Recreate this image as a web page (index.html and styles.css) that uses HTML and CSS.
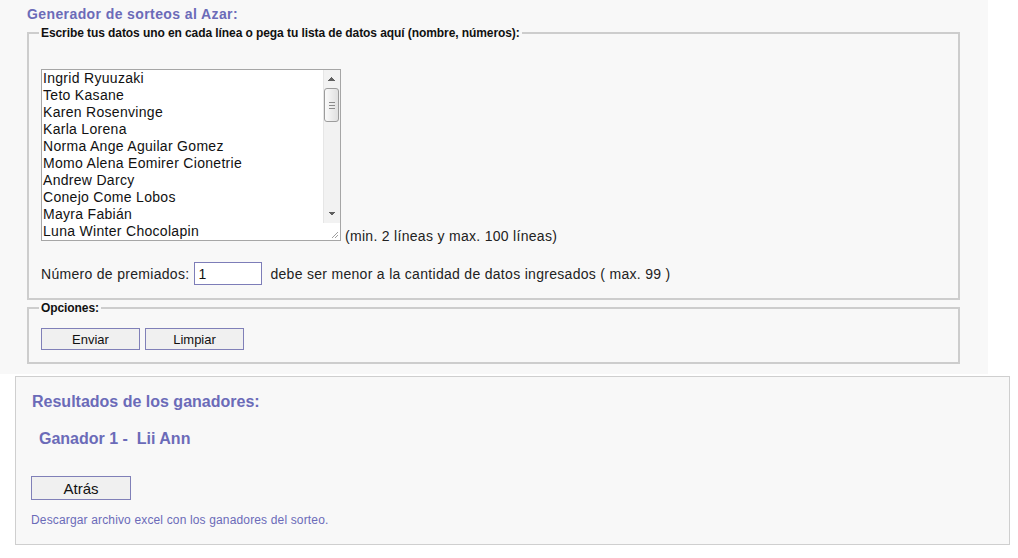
FILE: index.html
```html
<!DOCTYPE html>
<html lang="es">
<head>
  <meta charset="UTF-8" />
  <title>Generador de sorteos al Azar</title>
  <link rel="stylesheet" href="styles.css">
</head>
<body>
  <div class="sorteo">
    <h1 class="titulo">Generador de sorteos al Azar:</h1>
    <form class="formulario" onsubmit="return false;">
      <fieldset class="grupo datos">
        <legend>Escribe tus datos uno en cada línea o pega tu lista de datos aquí (nombre, números):</legend>
        <div class="fila-lista">
          <div class="caja">
            <textarea class="lista" id="lista">Ingrid Ryuuzaki
Teto Kasane
Karen Rosenvinge
Karla Lorena
Norma Ange Aguilar Gomez
Momo Alena Eomirer Cionetrie
Andrew Darcy
Conejo Come Lobos
Mayra Fabián
Luna Winter Chocolapin
Lii Ann
Sofía Márquez
Daniel Ortega
Valeria Campos
Miku Hatsune
Rin Kagamine
Len Kagamine
Luka Megurine
Gabriela Torres
Paola Ríos
Marco Antonio Ruiz
Lucía Herrera
Fernando Díaz
Camila Rojas
Alejandra Soto
Ricardo Vega
Natalia Paredes
Jorge Luis Medina
Daniela Fuentes
Andrea Salinas
Kaito Shion
Meiko Sakine
Neru Akita
Haku Yowane
Gumi Megpoid
Ana María Castro
Diego Navarro
Isabel Romero
Tomás Aguirre
Carolina Vargas
Pablo Méndez</textarea>
            <div class="barra" aria-hidden="true">
              <div class="barra-flecha arriba"></div>
              <div class="barra-pista">
                <div class="barra-pulgar"></div>
              </div>
              <div class="barra-flecha abajo"></div>
              <div class="barra-esquina"></div>
            </div>
          </div>
          <span class="nota">(min. 2 líneas y max. 100 líneas)</span>
        </div>
        <div class="fila-premiados">
          <label for="premiados">Número de premiados:</label>
          <input type="text" id="premiados" class="campo" value="1">
          <span>debe ser menor a la cantidad de datos ingresados ( max. 99 )</span>
        </div>
      </fieldset>
      <fieldset class="grupo opciones">
        <legend>Opciones:</legend>
        <div class="botones">
          <button type="submit" class="boton">Enviar</button>
          <button type="reset" class="boton">Limpiar</button>
        </div>
      </fieldset>
    </form>
  </div>

  <div class="resultados">
    <h2 class="resultados-titulo">Resultados de los ganadores:</h2>
    <p class="ganador">Ganador 1 -&nbsp; Lii Ann</p>
    <button type="button" class="boton atras">Atrás</button>
    <p class="descarga">Descargar archivo excel con los ganadores del sorteo.</p>
  </div>
</body>
</html>
```

FILE: styles.css
```css
/* Base */
* {
  box-sizing: border-box;
}
body {
  margin: 0;
  background: #fff;
  font-family: 'Liberation Sans', Arial, sans-serif;
  font-size: 14px;
  color: #222;
}

/* Panel del generador */
.sorteo {
  width: 988px;
  height: 374px;
  padding: 6px 0 0 27px;
  background: #f8f8f8;
}
.titulo {
  margin: 0;
  font-size: 14px;
  line-height: 16px;
  font-weight: bold;
  letter-spacing: 0.4px;
  color: #6b6bb8;
}
.grupo {
  width: 933px;
  margin: 0;
  padding: 0 12px;
  border: 2px solid #cdcdcd;
}
.grupo legend {
  margin-left: -2px;
  padding: 0 2px;
  font-size: 12px;
  line-height: 12px;
  font-weight: bold;
  letter-spacing: -0.08px;
  color: #111;
}
.datos {
  margin-top: 5px;
  padding-bottom: 13px;
}
.opciones {
  margin-top: 2px;
  padding-bottom: 12px;
}

/* Lista de datos */
.fila-lista,
.fila-premiados {
  letter-spacing: 0.3px;
}
.fila-lista {
  display: flex;
  align-items: flex-end;
  margin-top: 30px;
}
.caja {
  display: flex;
  width: 300px;
  height: 172px;
  border: 1px solid #a6a6a6;
  background: #fff;
}
.lista {
  flex: 1;
  min-width: 0;
  margin: 0;
  padding: 0 1px;
  border: 0;
  outline: none;
  background: #fff;
  font-family: 'Liberation Sans', Arial, sans-serif;
  font-size: 14px;
  line-height: 17px;
  letter-spacing: 0.3px;
  color: #111;
  overflow: hidden;
  resize: none;
}

/* Barra de desplazamiento dibujada */
.barra {
  display: flex;
  flex-direction: column;
  width: 17px;
}
.barra-flecha {
  height: 17px;
  background-color: #f2f2f2;
  background-repeat: no-repeat;
  background-size: 4px 4px;
  border-left: 1px solid #e6e6e6;
}
.arriba {
  background-image:
    linear-gradient(to bottom right, transparent 50%, #606060 50%),
    linear-gradient(to bottom left, transparent 50%, #606060 50%);
  background-position: 4px 7px, 8px 7px;
}
.abajo {
  background-image:
    linear-gradient(to top right, transparent 50%, #606060 50%),
    linear-gradient(to top left, transparent 50%, #606060 50%);
  background-position: 4px 6px, 8px 6px;
}
.barra-pista {
  flex: 1;
  padding-top: 1px;
  background: #f2f2f2;
  border-left: 1px solid #e6e6e6;
}
.barra-pulgar {
  height: 34px;
  margin: 0 1px 0 0;
  border: 1px solid #9c9c9c;
  border-radius: 3px;
  background:
    linear-gradient(#8a8a8a, #8a8a8a) center calc(50% - 3px) / 6px 1px no-repeat,
    linear-gradient(#8a8a8a, #8a8a8a) center / 6px 1px no-repeat,
    linear-gradient(#8a8a8a, #8a8a8a) center calc(50% + 3px) / 6px 1px no-repeat,
    linear-gradient(to right, #fafafa, #e0e0e0);
}
.barra-esquina {
  height: 17px;
  background: #fff linear-gradient(135deg, transparent 0 62%, #a0a0a0 62% 68%, transparent 68% 80%, #a0a0a0 80% 86%, transparent 86%) right 2px bottom 2px / 9px 9px no-repeat;
}
.nota {
  margin: 0 0 -3px 4px;
  line-height: 16px;
}

.fila-premiados {
  display: flex;
  align-items: center;
  margin-top: 21px;
}
.campo {
  width: 68px;
  height: 23px;
  margin: 0 8px 0 5px;
  padding: 0 3px;
  border: 1px solid #7d7db8;
  background: #fff;
  font-family: 'Liberation Sans', Arial, sans-serif;
  font-size: 14px;
  color: #111;
}

/* Botones */
.botones {
  display: flex;
  gap: 5px;
  margin-top: 14px;
}
.boton {
  width: 99px;
  height: 22px;
  margin: 0;
  padding: 0;
  border: 1px solid #8080b8;
  background: #f0f0f0;
  font-family: 'Liberation Sans', Arial, sans-serif;
  font-size: 13px;
  color: #111;
  cursor: pointer;
}
.boton:hover {
  background: #e4e4e4;
}

/* Resultados */
.resultados {
  width: 995px;
  height: 169px;
  margin: 2px 0 0 15px;
  padding: 15px 15px 0;
  border: 1px solid #cfcfcf;
  background: #f8f8f8;
}
.resultados-titulo {
  margin: 0 0 0 1px;
  font-size: 16px;
  line-height: 19px;
  font-weight: bold;
  color: #6b6bb8;
}
.ganador {
  margin: 18px 0 0 8px;
  font-size: 16px;
  line-height: 19px;
  font-weight: bold;
  color: #6b6bb8;
}
.atras {
  display: block;
  width: 100px;
  height: 24px;
  margin-top: 28px;
  font-size: 15px;
}
.descarga {
  margin: 13px 0 0;
  font-size: 12px;
  line-height: 14px;
  letter-spacing: 0.15px;
  color: #6b6bb8;
}
```
